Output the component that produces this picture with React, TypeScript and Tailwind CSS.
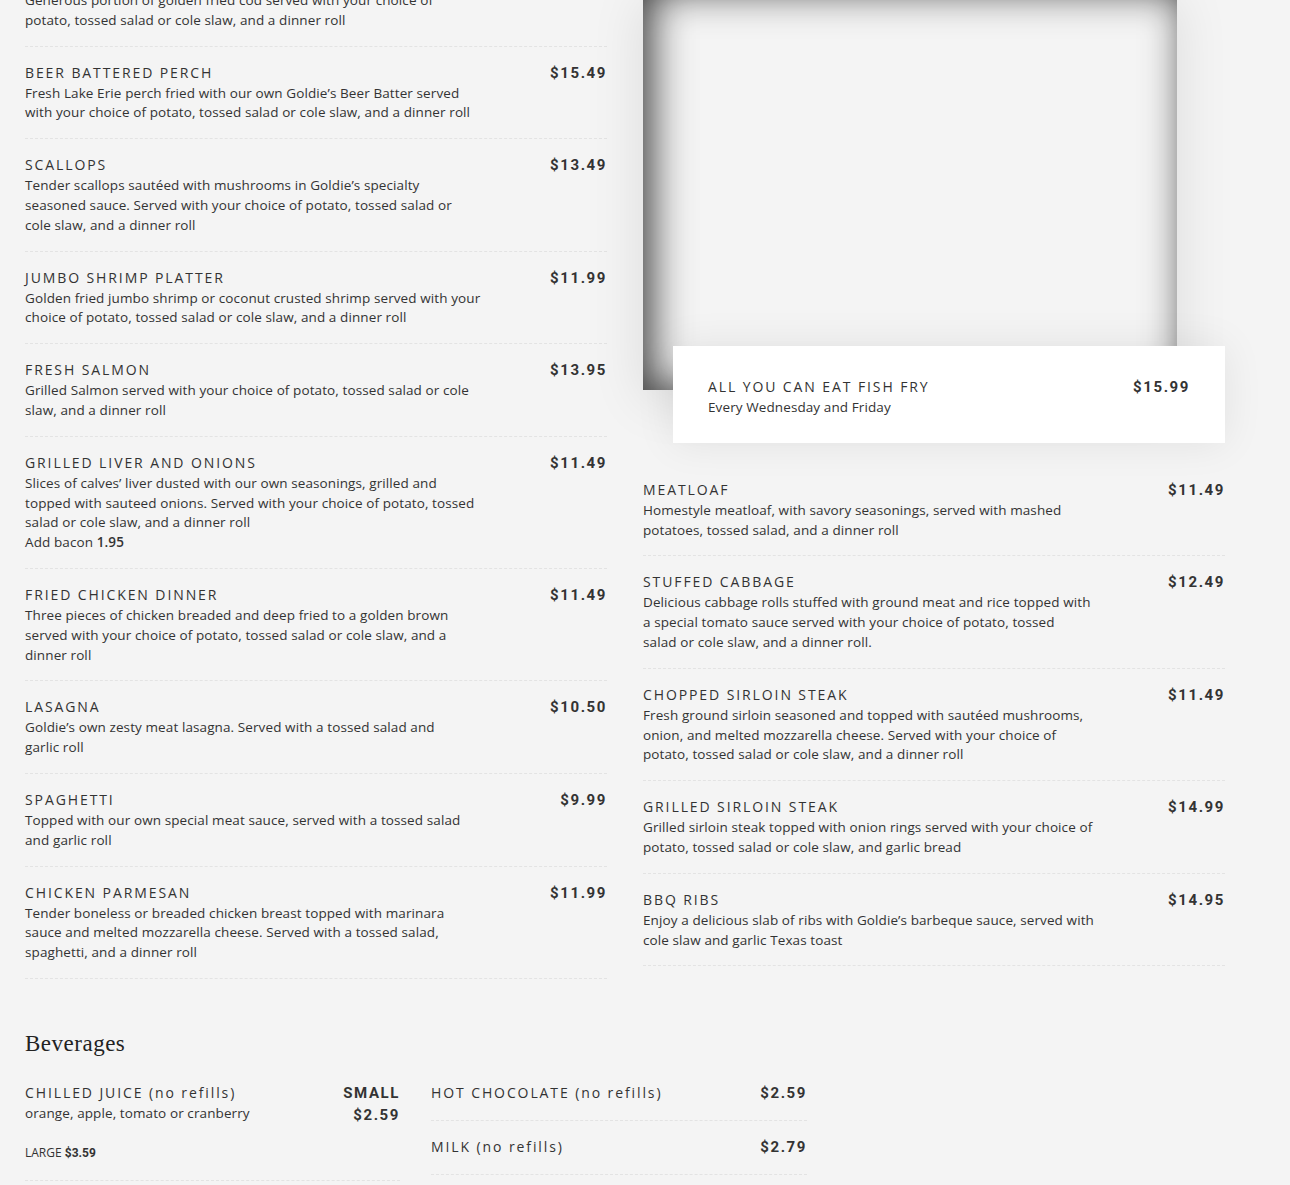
import React from "react";

type Item = { name: string; lines: React.ReactNode[]; price: string };

const leftItems: Item[] = [
  {
    name: "GOLDEN FRIED COD",
    lines: [
      "Generous portion of golden fried cod served with your choice of",
      "potato, tossed salad or cole slaw, and a dinner roll",
    ],
    price: "$13.49",
  },
  {
    name: "BEER BATTERED PERCH",
    lines: [
      "Fresh Lake Erie perch fried with our own Goldie’s Beer Batter served",
      "with your choice of potato, tossed salad or cole slaw, and a dinner roll",
    ],
    price: "$15.49",
  },
  {
    name: "SCALLOPS",
    lines: [
      "Tender scallops sautéed with mushrooms in Goldie’s specialty",
      "seasoned sauce. Served with your choice of potato, tossed salad or",
      "cole slaw, and a dinner roll",
    ],
    price: "$13.49",
  },
  {
    name: "JUMBO SHRIMP PLATTER",
    lines: [
      "Golden fried jumbo shrimp or coconut crusted shrimp served with your",
      "choice of potato, tossed salad or cole slaw, and a dinner roll",
    ],
    price: "$11.99",
  },
  {
    name: "FRESH SALMON",
    lines: [
      "Grilled Salmon served with your choice of potato, tossed salad or cole",
      "slaw, and a dinner roll",
    ],
    price: "$13.95",
  },
  {
    name: "GRILLED LIVER AND ONIONS",
    lines: [
      "Slices of calves’ liver dusted with our own seasonings, grilled and",
      "topped with sauteed onions. Served with your choice of potato, tossed",
      "salad or cole slaw, and a dinner roll",
      <>
        Add bacon <strong className="font-semibold">1.95</strong>
      </>,
    ],
    price: "$11.49",
  },
  {
    name: "FRIED CHICKEN DINNER",
    lines: [
      "Three pieces of chicken breaded and deep fried to a golden brown",
      "served with your choice of potato, tossed salad or cole slaw, and a",
      "dinner roll",
    ],
    price: "$11.49",
  },
  {
    name: "LASAGNA",
    lines: [
      "Goldie’s own zesty meat lasagna. Served with a tossed salad and",
      "garlic roll",
    ],
    price: "$10.50",
  },
  {
    name: "SPAGHETTI",
    lines: [
      "Topped with our own special meat sauce, served with a tossed salad",
      "and garlic roll",
    ],
    price: "$9.99",
  },
  {
    name: "CHICKEN PARMESAN",
    lines: [
      "Tender boneless or breaded chicken breast topped with marinara",
      "sauce and melted mozzarella cheese. Served with a tossed salad,",
      "spaghetti, and a dinner roll",
    ],
    price: "$11.99",
  },
];

const rightItems: Item[] = [
  {
    name: "MEATLOAF",
    lines: [
      "Homestyle meatloaf, with savory seasonings, served with mashed",
      "potatoes, tossed salad, and a dinner roll",
    ],
    price: "$11.49",
  },
  {
    name: "STUFFED CABBAGE",
    lines: [
      "Delicious cabbage rolls stuffed with ground meat and rice topped with",
      "a special tomato sauce served with your choice of potato, tossed",
      "salad or cole slaw, and a dinner roll.",
    ],
    price: "$12.49",
  },
  {
    name: "CHOPPED SIRLOIN STEAK",
    lines: [
      "Fresh ground sirloin seasoned and topped with sautéed mushrooms,",
      "onion, and melted mozzarella cheese. Served with your choice of",
      "potato, tossed salad or cole slaw, and a dinner roll",
    ],
    price: "$11.49",
  },
  {
    name: "GRILLED SIRLOIN STEAK",
    lines: [
      "Grilled sirloin steak topped with onion rings served with your choice of",
      "potato, tossed salad or cole slaw, and garlic bread",
    ],
    price: "$14.99",
  },
  {
    name: "BBQ RIBS",
    lines: [
      "Enjoy a delicious slab of ribs with Goldie’s barbeque sauce, served with",
      "cole slaw and garlic Texas toast",
    ],
    price: "$14.95",
  },
];

function Name({ children }: { children: React.ReactNode }) {
  return (
    <h3 className="whitespace-nowrap text-[14px] font-normal leading-[22px] tracking-[1.9px] text-[#333]">
      {children}
    </h3>
  );
}

function Price({ children }: { children: React.ReactNode }) {
  return (
    <span className="font-['Roboto',sans-serif] text-[15px] font-bold leading-[22px] tracking-[1.6px] text-[#333]">
      {children}
    </span>
  );
}

function Desc({ lines }: { lines: React.ReactNode[] }) {
  return (
    <p className="text-[13.5px] leading-[19.8px] tracking-[0.1px] text-[#333]">
      {lines.map((line, i) => (
        <span key={i} className="block whitespace-nowrap">
          {line}
        </span>
      ))}
    </p>
  );
}

function MenuItem({ item }: { item: Item }) {
  return (
    <div className="flex items-start justify-between border-b border-dashed border-[#e3e3e3] py-[15px]">
      <div className="w-[470px]">
        <Name>{item.name}</Name>
        <Desc lines={item.lines} />
      </div>
      <Price>{item.price}</Price>
    </div>
  );
}

export default function App() {
  return (
    <div className="min-h-screen overflow-hidden bg-[#f4f4f4] font-['Open_Sans',sans-serif] text-[#333]">
      <div className="-mt-[46px] w-[1225px] pl-[25px]">
        <div className="grid grid-cols-[582px_582px] gap-x-[36px]">
          <div>
            {leftItems.map((item) => (
              <MenuItem key={item.name} item={item} />
            ))}
          </div>

          <div>
            <div className="mt-[36px] h-[400px] w-[534px] bg-[#f4f4f4] shadow-[inset_8px_0_40px_rgba(0,0,0,0.78),0_10px_50px_rgba(0,0,0,0.1)]" />
            <div className="relative -mt-[44px] ml-[30px] flex items-start justify-between bg-white px-[35px] pb-[25px] pt-[30px] shadow-[0_0_40px_rgba(0,0,0,0.08)]">
              <div>
                <Name>ALL YOU CAN EAT FISH FRY</Name>
                <Desc lines={["Every Wednesday and Friday"]} />
              </div>
              <Price>$15.99</Price>
            </div>
            <div className="mt-[21px]">
              {rightItems.map((item) => (
                <MenuItem key={item.name} item={item} />
              ))}
            </div>
          </div>
        </div>

        <h2 className="mt-[51px] font-['Liberation_Serif',serif] text-[23px] leading-[28px] tracking-[0.5px] text-[#222]">
          Beverages
        </h2>

        <div className="mt-[9px] grid grid-cols-[375px_376px] gap-x-[31px]">
          <div className="flex items-start justify-between border-b border-dashed border-[#e3e3e3] pb-[18px] pt-[15px]">
            <div>
              <Name>CHILLED JUICE (no refills)</Name>
              <Desc lines={["orange, apple, tomato or cranberry"]} />
              <p className="mt-[20px] text-[12px] leading-[18px]">
                LARGE <strong className="font-['Roboto',sans-serif] font-bold">$3.59</strong>
              </p>
            </div>
            <div className="flex flex-col items-end">
              <Price>SMALL</Price>
              <Price>$2.59</Price>
            </div>
          </div>
          <div>
            <div className="flex items-start justify-between border-b border-dashed border-[#e3e3e3] pb-[16px] pt-[15px]">
              <Name>HOT CHOCOLATE (no refills)</Name>
              <Price>$2.59</Price>
            </div>
            <div className="flex items-start justify-between border-b border-dashed border-[#e3e3e3] pb-[16px] pt-[15px]">
              <Name>MILK (no refills)</Name>
              <Price>$2.79</Price>
            </div>
          </div>
        </div>
      </div>
    </div>
  );
}
